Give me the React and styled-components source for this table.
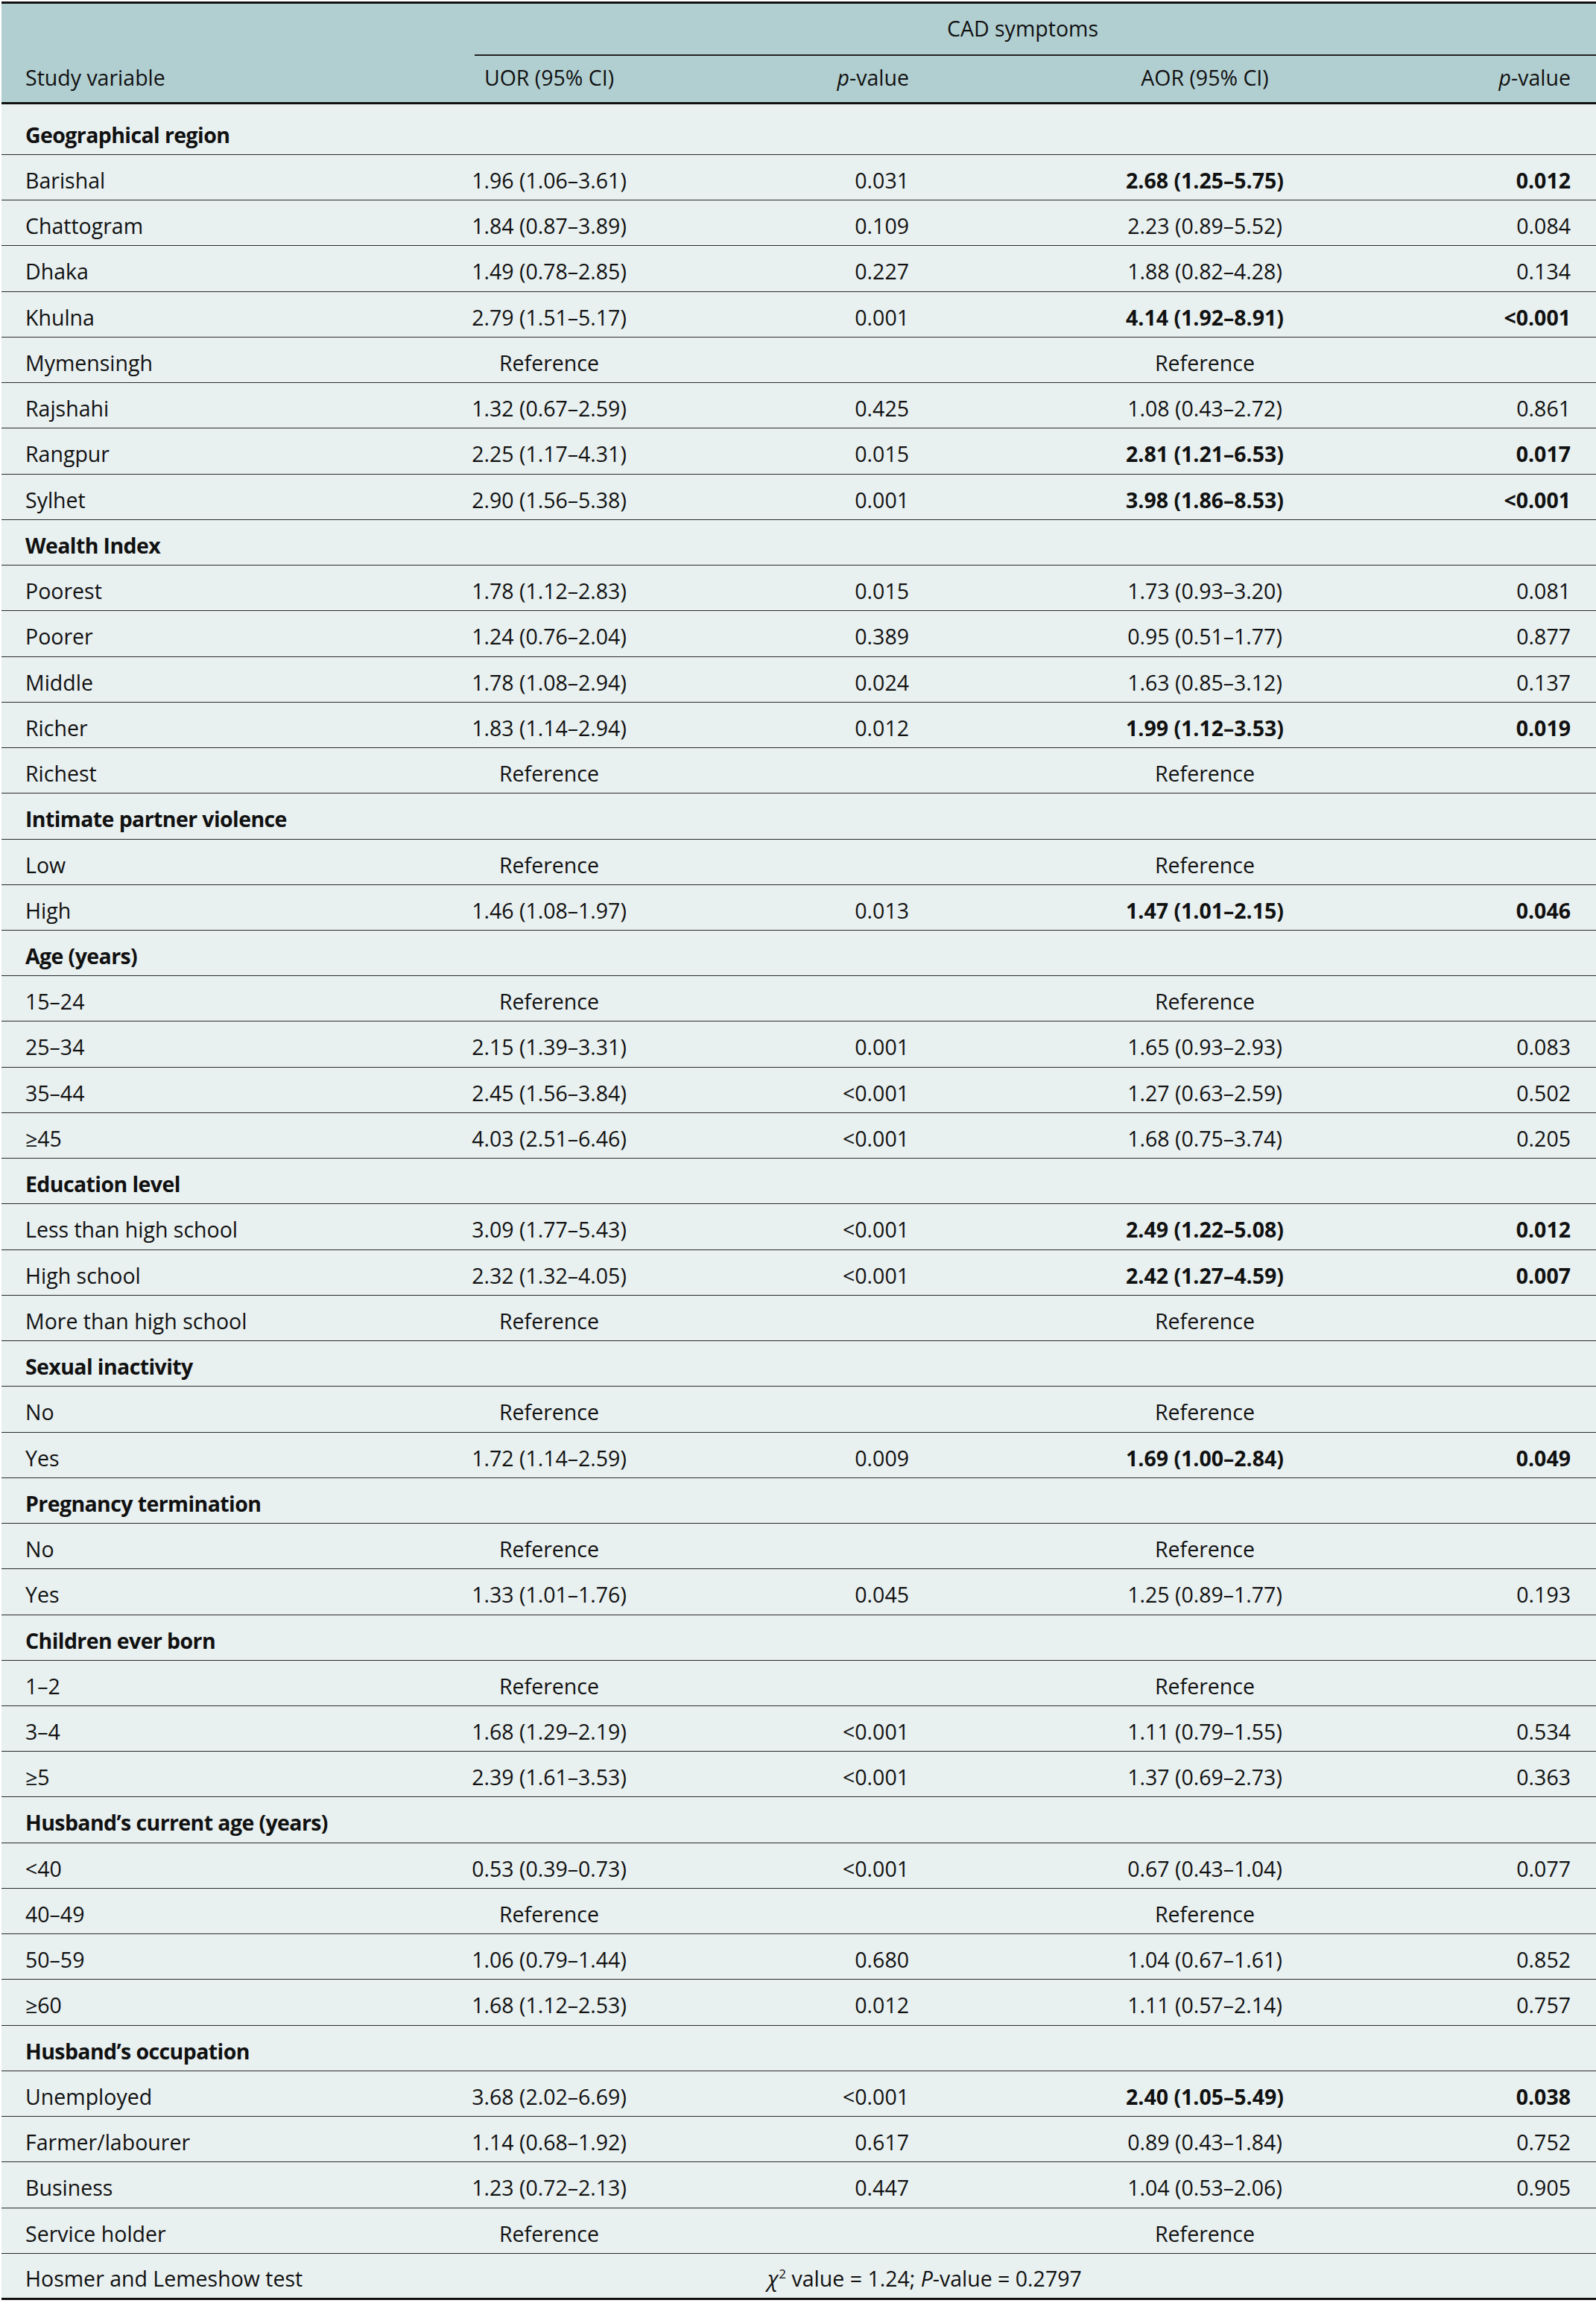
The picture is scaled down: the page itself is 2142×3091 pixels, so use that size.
import styled, { createGlobalStyle } from "styled-components";

const GlobalStyle = createGlobalStyle`
  body {
    margin: 0;
    background: #ffffff;
    font-family: "Open Sans", "Noto Sans", sans-serif;
    color: #111;
  }
`;

const COLS = "618px 234px 398px 730px 160px";

const sections = [
  {
    title: "Geographical region",
    rows: [
      ["Barishal", "1.96 (1.06–3.61)", "0.031", "2.68 (1.25–5.75)", "0.012", true],
      ["Chattogram", "1.84 (0.87–3.89)", "0.109", "2.23 (0.89–5.52)", "0.084"],
      ["Dhaka", "1.49 (0.78–2.85)", "0.227", "1.88 (0.82–4.28)", "0.134"],
      ["Khulna", "2.79 (1.51–5.17)", "0.001", "4.14 (1.92–8.91)", "<0.001", true],
      ["Mymensingh"],
      ["Rajshahi", "1.32 (0.67–2.59)", "0.425", "1.08 (0.43–2.72)", "0.861"],
      ["Rangpur", "2.25 (1.17–4.31)", "0.015", "2.81 (1.21–6.53)", "0.017", true],
      ["Sylhet", "2.90 (1.56–5.38)", "0.001", "3.98 (1.86–8.53)", "<0.001", true],
    ],
  },
  {
    title: "Wealth Index",
    rows: [
      ["Poorest", "1.78 (1.12–2.83)", "0.015", "1.73 (0.93–3.20)", "0.081"],
      ["Poorer", "1.24 (0.76–2.04)", "0.389", "0.95 (0.51–1.77)", "0.877"],
      ["Middle", "1.78 (1.08–2.94)", "0.024", "1.63 (0.85–3.12)", "0.137"],
      ["Richer", "1.83 (1.14–2.94)", "0.012", "1.99 (1.12–3.53)", "0.019", true],
      ["Richest"],
    ],
  },
  {
    title: "Intimate partner violence",
    rows: [
      ["Low"],
      ["High", "1.46 (1.08–1.97)", "0.013", "1.47 (1.01–2.15)", "0.046", true],
    ],
  },
  {
    title: "Age (years)",
    rows: [
      ["15–24"],
      ["25–34", "2.15 (1.39–3.31)", "0.001", "1.65 (0.93–2.93)", "0.083"],
      ["35–44", "2.45 (1.56–3.84)", "<0.001", "1.27 (0.63–2.59)", "0.502"],
      ["≥45", "4.03 (2.51–6.46)", "<0.001", "1.68 (0.75–3.74)", "0.205"],
    ],
  },
  {
    title: "Education level",
    rows: [
      ["Less than high school", "3.09 (1.77–5.43)", "<0.001", "2.49 (1.22–5.08)", "0.012", true],
      ["High school", "2.32 (1.32–4.05)", "<0.001", "2.42 (1.27–4.59)", "0.007", true],
      ["More than high school"],
    ],
  },
  {
    title: "Sexual inactivity",
    rows: [
      ["No"],
      ["Yes", "1.72 (1.14–2.59)", "0.009", "1.69 (1.00–2.84)", "0.049", true],
    ],
  },
  {
    title: "Pregnancy termination",
    rows: [
      ["No"],
      ["Yes", "1.33 (1.01–1.76)", "0.045", "1.25 (0.89–1.77)", "0.193"],
    ],
  },
  {
    title: "Children ever born",
    rows: [
      ["1–2"],
      ["3–4", "1.68 (1.29–2.19)", "<0.001", "1.11 (0.79–1.55)", "0.534"],
      ["≥5", "2.39 (1.61–3.53)", "<0.001", "1.37 (0.69–2.73)", "0.363"],
    ],
  },
  {
    title: "Husband’s current age (years)",
    rows: [
      ["<40", "0.53 (0.39–0.73)", "<0.001", "0.67 (0.43–1.04)", "0.077"],
      ["40–49"],
      ["50–59", "1.06 (0.79–1.44)", "0.680", "1.04 (0.67–1.61)", "0.852"],
      ["≥60", "1.68 (1.12–2.53)", "0.012", "1.11 (0.57–2.14)", "0.757"],
    ],
  },
  {
    title: "Husband’s occupation",
    rows: [
      ["Unemployed", "3.68 (2.02–6.69)", "<0.001", "2.40 (1.05–5.49)", "0.038", true],
      ["Farmer/labourer", "1.14 (0.68–1.92)", "0.617", "0.89 (0.43–1.84)", "0.752"],
      ["Business", "1.23 (0.72–2.13)", "0.447", "1.04 (0.53–2.06)", "0.905"],
      ["Service holder"],
    ],
  },
];

function TableBody() {
  let index = 0;
  return sections.map((section) => {
    const first = index === 0;
    index += 1 + section.rows.length;
    return [
      <Row key={section.title} $first={first}>
        <SectionTitle>{section.title}</SectionTitle>
      </Row>,
      ...section.rows.map(([label, uor, p1, aor, p2, bold]) => (
        <Row key={section.title + label}>
          <Cell>{label}</Cell>
          <Cell $align="center">{uor || "Reference"}</Cell>
          <Cell $align="right">{p1}</Cell>
          <Cell $align="center" $bold={bold}>
            {aor || "Reference"}
          </Cell>
          <Cell $align="right" $bold={bold}>
            {p2}
          </Cell>
        </Row>
      )),
    ];
  });
}

export default function App() {
  return (
    <>
      <GlobalStyle />
      <Table>
        <Head>
          <HeadTop>
            <Spanner>CAD symptoms</Spanner>
          </HeadTop>
          <HeadRow>
            <Cell>Study variable</Cell>
            <Cell $align="center">UOR (95% CI)</Cell>
            <Cell $align="right">
              <i>p</i>-value
            </Cell>
            <Cell $align="center">AOR (95% CI)</Cell>
            <Cell $align="right">
              <i>p</i>-value
            </Cell>
          </HeadRow>
        </Head>
        <TableBody />
        <Row $last>
          <Cell>Hosmer and Lemeshow test</Cell>
          <Note>
            <i>χ</i>
            <sup>2</sup> value = 1.24; <i>P</i>-value = 0.2797
          </Note>
        </Row>
      </Table>
    </>
  );
}

const Table = styled.div`
  width: 2140px;
  margin: 2px 0 0 2px;
  background: #e8f0f0;
  border-top: 3px solid #111;
  border-bottom: 3px solid #111;
  font-size: 28.5px;
  line-height: 1.2;
`;

const Head = styled.div`
  background: #b1cfd1;
  border-bottom: 3px solid #111;
`;

const HeadTop = styled.div`
  display: grid;
  grid-template-columns: ${COLS};
  height: 70px;
`;

const Spanner = styled.div`
  grid-column: 2 / -1;
  margin-left: 17px;
  padding-right: 34px;
  display: flex;
  align-items: center;
  justify-content: center;
  border-bottom: 2px solid #222;
  padding-bottom: 2px;
`;

const HeadRow = styled.div`
  display: grid;
  grid-template-columns: ${COLS};
  height: 62px;
  align-items: center;
  padding-bottom: 4px;
  box-sizing: border-box;
`;

const Row = styled.div`
  display: grid;
  grid-template-columns: ${COLS};
  align-items: center;
  box-sizing: border-box;
  height: ${(p) => (p.$first ? "68px" : p.$last ? "59px" : "61.24px")};
  padding-top: ${(p) => (p.$first ? "16px" : "8px")};
  border-bottom: ${(p) => (p.$last ? "none" : "1.5px solid #2a2a2a")};
`;

const Cell = styled.div`
  padding: 0 ${(p) => (p.$align === "right" ? "32px" : "0")} 0
    ${(p) => (p.$align ? "0" : "32px")};
  text-align: ${(p) => p.$align || "left"};
  font-weight: ${(p) => (p.$bold ? 700 : 400)};
  white-space: nowrap;

  &:nth-child(5) {
    padding-right: 34px;
  }
`;

const SectionTitle = styled.div`
  padding-left: 32px;
  font-weight: 700;
  letter-spacing: -0.6px;
  white-space: nowrap;
`;

const Note = styled.div`
  grid-column: 2 / -1;
  padding-left: 410px;
  white-space: nowrap;

  sup {
    font-size: 0.6em;
    vertical-align: 0.65em;
    line-height: 0;
    margin-left: 1px;
  }
`;
